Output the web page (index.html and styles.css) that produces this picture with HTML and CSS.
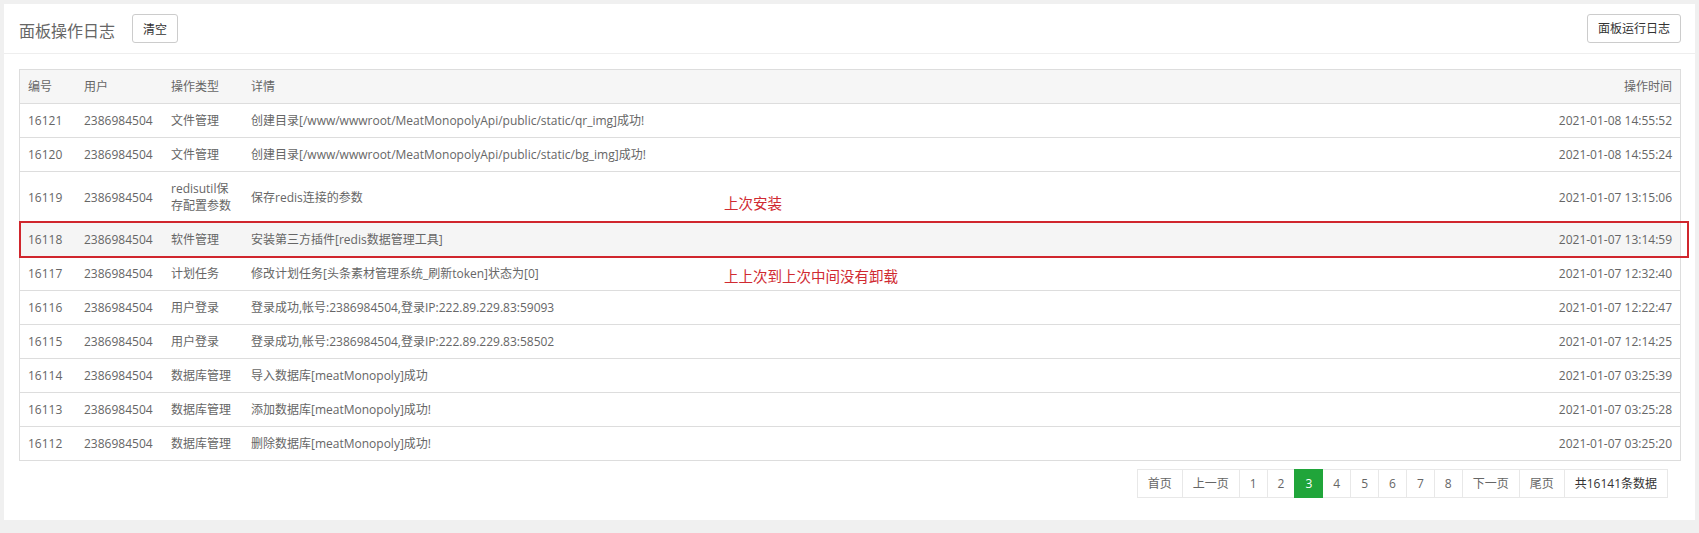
FILE: index.html
```html
<!DOCTYPE html>
<html>
<head>
  <meta charset="utf-8">
  <title>面板操作日志</title>
  <link rel="stylesheet" href="styles.css">
</head>
<body>
<div class="main">
  <!-- title bar -->
  <div class="title-bar">
    <span class="title">面板操作日志</span>
    <button class="btn btn-clear">清空</button>
    <button class="btn btn-right">面板运行日志</button>
  </div>

  <div class="content">
    <div class="log-wrap">
      <table class="log-table">
        <thead>
          <tr>
            <th class="c-id">编号</th>
            <th class="c-user">用户</th>
            <th class="c-type">操作类型</th>
            <th>详情</th>
            <th class="c-time">操作时间</th>
          </tr>
        </thead>
        <tbody>
          <tr><td>16121</td><td>2386984504</td><td>文件管理</td><td>创建目录[/www/wwwroot/MeatMonopolyApi/public/static/qr_img]成功!</td><td class="c-time">2021-01-08 14:55:52</td></tr>
          <tr><td>16120</td><td>2386984504</td><td>文件管理</td><td>创建目录[/www/wwwroot/MeatMonopolyApi/public/static/bg_img]成功!</td><td class="c-time">2021-01-08 14:55:24</td></tr>
          <tr><td>16119</td><td>2386984504</td><td>redisutil保存配置参数</td><td>保存redis连接的参数</td><td class="c-time">2021-01-07 13:15:06</td></tr>
          <tr class="hover"><td>16118</td><td>2386984504</td><td>软件管理</td><td>安装第三方插件[redis数据管理工具]</td><td class="c-time">2021-01-07 13:14:59</td></tr>
          <tr><td>16117</td><td>2386984504</td><td>计划任务</td><td>修改计划任务[头条素材管理系统_刷新token]状态为[0]</td><td class="c-time">2021-01-07 12:32:40</td></tr>
          <tr><td>16116</td><td>2386984504</td><td>用户登录</td><td>登录成功,帐号:2386984504,登录IP:222.89.229.83:59093</td><td class="c-time">2021-01-07 12:22:47</td></tr>
          <tr><td>16115</td><td>2386984504</td><td>用户登录</td><td>登录成功,帐号:2386984504,登录IP:222.89.229.83:58502</td><td class="c-time">2021-01-07 12:14:25</td></tr>
          <tr><td>16114</td><td>2386984504</td><td>数据库管理</td><td>导入数据库[meatMonopoly]成功</td><td class="c-time">2021-01-07 03:25:39</td></tr>
          <tr><td>16113</td><td>2386984504</td><td>数据库管理</td><td>添加数据库[meatMonopoly]成功!</td><td class="c-time">2021-01-07 03:25:28</td></tr>
          <tr><td>16112</td><td>2386984504</td><td>数据库管理</td><td>删除数据库[meatMonopoly]成功!</td><td class="c-time">2021-01-07 03:25:20</td></tr>
        </tbody>
      </table>

      <!-- screenshot annotations -->
      <div class="mark-box"></div>
      <span class="mark-text mark-1">上次安装</span>
      <span class="mark-text mark-2">上上次到上次中间没有卸载</span>
    </div>

    <!-- pager -->
    <div class="page">
      <a href="#">首页</a>
      <a href="#">上一页</a>
      <a href="#">1</a>
      <a href="#">2</a>
      <span class="current">3</span>
      <a href="#">4</a>
      <a href="#">5</a>
      <a href="#">6</a>
      <a href="#">7</a>
      <a href="#">8</a>
      <a href="#">下一页</a>
      <a href="#">尾页</a>
      <span class="total">共16141条数据</span>
    </div>
  </div>
</div>
</body>
</html>
```

FILE: styles.css
```css
body {
  margin: 0;
  background-color: #f0f0f0;
  font-family: "Open Sans", "Noto Sans CJK SC", sans-serif;
  font-size: 12px;
  color: #666;
}
.main {
  margin: 4px;
  background-color: #fff;
}
/* title bar */
.title-bar {
  display: flex;
  align-items: center;
  height: 49px;
  padding: 0 14px 0 15px;
  border-bottom: 1px solid #eee;
}
.title {
  font-size: 16px;
  color: #666;
  padding-top: 3px;
  margin-right: 17px;
}
.btn {
  height: 29px;
  padding: 0 10px;
  background-color: #fff;
  border: 1px solid #ccc;
  border-radius: 3px;
  font-family: inherit;
  font-size: 12px;
  color: #333;
  cursor: pointer;
}
.btn-right {
  margin-left: auto;
  margin-top: -1px;
}
/* table */
.content {
  padding: 15px 14px 22px 15px;
}
.log-wrap {
  position: relative;
}
.log-table {
  width: 100%;
  border-collapse: collapse;
  border: 1px solid #ddd;
}
.log-table th,
.log-table td {
  padding: 8px;
  line-height: 17px;
  border-top: 1px solid #ddd;
  text-align: left;
  font-weight: normal;
  vertical-align: middle;
  color: #666;
}
.log-table th {
  background-color: #f6f6f6;
}
.log-table tr.hover td {
  background-color: #f5f5f5;
}
.c-id { width: 40px; }
.c-user { width: 71px; }
.c-type { width: 64px; }
.log-table .c-time {
  width: 130px;
  text-align: right;
}
/* red marks drawn on the screenshot */
.mark-box {
  position: absolute;
  left: 0;
  top: 152px;
  width: calc(100% + 4px);
  height: 33px;
  border: 2px solid #d0262d;
}
.mark-text {
  position: absolute;
  left: 705px;
  font-size: 14.5px;
  line-height: 18px;
  color: #d02a31;
  white-space: nowrap;
}
.mark-1 { top: 126px; }
.mark-2 { top: 199px; }
/* pager */
.page {
  display: flex;
  justify-content: flex-end;
  margin-top: 8px;
  margin-right: 13px;
}
.page a,
.page span {
  display: inline-block;
  height: 27px;
  line-height: 27px;
  padding: 0 10px;
  margin-left: -1px;
  border: 1px solid #e8e8e8;
  color: #666;
  text-decoration: none;
  background-color: #fff;
}
.page .current {
  background-color: #20a53a;
  border-color: #20a53a;
  color: #fff;
  position: relative;
}
.page .total {
  color: #333;
}
```
